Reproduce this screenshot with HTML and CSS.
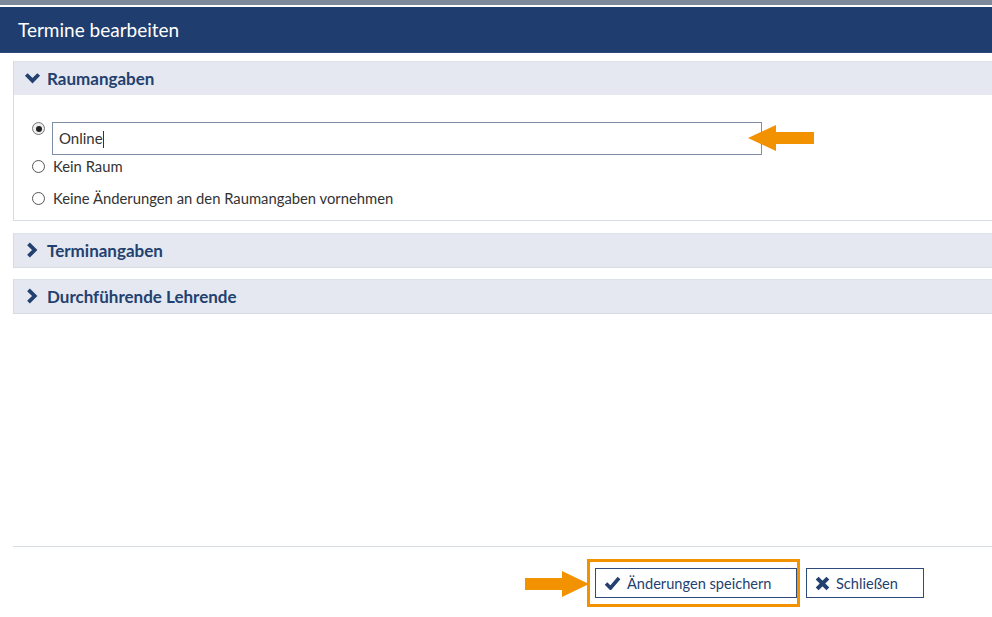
FILE: index.html
```html
<!DOCTYPE html>
<html lang="de">
<head>
<meta charset="utf-8">
<title>Termine bearbeiten</title>
<link rel="stylesheet" href="styles.css">
</head>
<body>
<div class="page">
  <div class="strip"></div>
  <div class="titlebar">Termine bearbeiten</div>
  <main class="main">
    <section class="panel open">
      <div class="panel-head">
        <svg class="chev-down" viewBox="0 0 16 12" width="17" height="12"><path d="M1.8 2.5 L8 8.7 L14.2 2.5" fill="none" stroke="#23416f" stroke-width="3.8" stroke-linejoin="miter"/></svg>
        <span>Raumangaben</span>
      </div>
      <div class="panel-body">
        <div class="opt opt-first">
          <span class="radio checked"></span>
          <div class="textbox">Online<span class="caret"></span></div>
          <svg class="arrow arrow-left" viewBox="0 0 66 30" width="66" height="30"><path d="M0 13 L28 0 L28 7 L66 7 L66 19 L28 19 L28 26 Z" fill="#f39200"/></svg>
        </div>
        <div class="opt"><span class="radio"></span><span>Kein Raum</span></div>
        <div class="opt"><span class="radio"></span><span>Keine Änderungen an den Raumangaben vornehmen</span></div>
      </div>
    </section>
    <section class="panel">
      <div class="panel-head">
        <svg class="chev-right" viewBox="0 0 12 16" width="12" height="16"><path d="M2.5 1.8 L8.7 8 L2.5 14.2" fill="none" stroke="#23416f" stroke-width="3.8"/></svg>
        <span>Terminangaben</span>
      </div>
    </section>
    <section class="panel">
      <div class="panel-head">
        <svg class="chev-right" viewBox="0 0 12 16" width="12" height="16"><path d="M2.5 1.8 L8.7 8 L2.5 14.2" fill="none" stroke="#23416f" stroke-width="3.8"/></svg>
        <span>Durchführende Lehrende</span>
      </div>
    </section>
  </main>
  <footer class="footer">
    <div class="save-wrap">
      <svg class="arrow arrow-right" viewBox="0 0 66 27" width="66" height="27"><path d="M64 13 L37 0 L37 7 L0 7 L0 19 L37 19 L37 26 Z" fill="#f39200"/></svg>
      <span class="highlight"></span>
      <button class="btn btn-save">
        <svg viewBox="0 0 16 14" width="17" height="14"><path d="M1.5 7.5 L6 12 L14.5 2" fill="none" stroke="#23416f" stroke-width="3.6"/></svg>
        Änderungen speichern
      </button>
    </div>
    <button class="btn btn-close">
      <svg viewBox="0 0 14 14" width="15" height="15"><path d="M2 2 L12 12 M12 2 L2 12" fill="none" stroke="#23416f" stroke-width="3.8"/></svg>
      Schließen
    </button>
  </footer>
</div>
</body>
</html>
```
FILE: styles.css
```css
* { box-sizing: border-box; }
html, body { margin: 0; padding: 0; background: #ffffff; }
body { font-family: Lato, "Open Sans", sans-serif; color: #333; overflow: hidden; }
.page { width: 992px; height: 617px; display: flex; flex-direction: column; overflow: hidden; }
.strip { height: 5px; background: #7d889b; margin-bottom: 2px; flex: none; }
.titlebar {
  flex: none; height: 46px; background: #1f3d6e; color: #fff;
  font-size: 19px; line-height: 45px; padding-left: 18px;
  border-bottom: 1px solid #2e4a78;
}
.main { flex: 1; padding: 8px 0 0 13px; display: flex; flex-direction: column; gap: 11px; }
.panel { margin-right: -10px; border: 1px solid #d6dbe4; border-top-color: #dde1e8; }
.panel.open { margin-bottom: 1px; }
.panel-head {
  height: 33px; background: #e5e8f1; display: flex; align-items: center;
  padding: 0 0 1px 10px; gap: 6px; color: #23416f; font-weight: 700; font-size: 17px;
}
.chev-right { margin-left: 2px; margin-right: 3px; }
.panel-body { background: #fff; padding: 27px 0 6px 18px; }
.opt { display: flex; align-items: center; gap: 8px; font-size: 14.8px; color: #333; height: 32px; }
.opt-first { align-items: flex-start; height: 33px; position: relative; gap: 7px; margin-bottom: -5px; }
.radio {
  width: 13px; height: 13px; border-radius: 50%; border: 1px solid #555;
  background: #fff; flex: none; position: relative;
}
.opt-first .radio { border-color: #777; background: #eee; }
.radio.checked::after {
  content: ""; position: absolute; left: 2.5px; top: 2.5px; width: 6px; height: 6px;
  border-radius: 50%; background: #222;
}
.textbox {
  width: 710px; height: 33px; border: 1px solid #7f8da6; font-size: 15px; color: #333;
  padding-left: 6px; line-height: 31px;
}
.caret { display: inline-block; width: 1px; height: 17px; background: #333; vertical-align: middle; position: relative; top: -1px; }
.arrow { position: absolute; }
.arrow-left { left: 716px; top: 3px; }
.footer {
  flex: none; height: 71px; margin-left: 13px; border-top: 1px solid #d8dde6;
  display: flex; justify-content: flex-end; align-items: flex-start; padding: 21px 68px 0 0; gap: 9px;
}
.save-wrap { position: relative; }
.highlight {
  position: absolute; left: -8px; top: -9px; width: 213px; height: 48px;
  border: 3px solid #f39200; pointer-events: none;
}
.arrow-right { left: -70px; top: 3px; }
.btn {
  font-family: Lato, "Open Sans", sans-serif; font-size: 14.6px; color: #23416f;
  background: #fff; border: 1px solid #2e4b7c; height: 30px; display: flex; align-items: center;
  gap: 6px; padding: 0 8px 0 8px; cursor: pointer; margin: 0;
}
.btn-save { width: 202px; }
.btn-close { width: 118px; }
```
